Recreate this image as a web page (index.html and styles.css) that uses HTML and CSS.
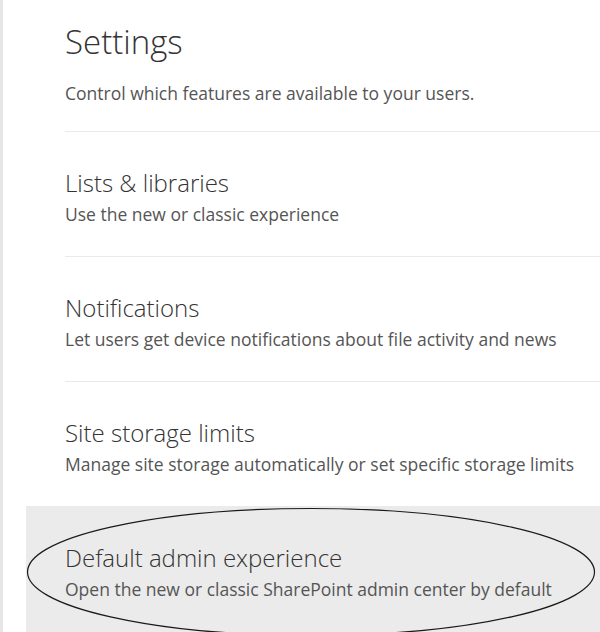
FILE: index.html
```html
<!DOCTYPE html>
<html lang="en">
<head>
<meta charset="utf-8">
<title>Settings</title>
<link rel="stylesheet" href="styles.css">
</head>
<body>
<div class="page">
  <header class="header">
    <h1 class="heading">Settings</h1>
    <p class="intro">Control which features are available to your users.</p>
  </header>
  <ul class="list">
    <li class="item">
      <div class="title">Lists &amp; libraries</div>
      <div class="desc">Use the new or classic experience</div>
    </li>
    <li class="item">
      <div class="title">Notifications</div>
      <div class="desc">Let users get device notifications about file activity and news</div>
    </li>
    <li class="item">
      <div class="title">Site storage limits</div>
      <div class="desc">Manage site storage automatically or set specific storage limits</div>
    </li>
    <li class="item item-selected">
      <div class="title">Default admin experience</div>
      <div class="desc">Open the new or classic SharePoint admin center by default</div>
      <svg class="ellipse" width="574" height="130" viewBox="0 0 574 130" aria-hidden="true">
        <ellipse cx="285" cy="66" rx="283.5" ry="63.5" fill="none" stroke="#1a1a1a" stroke-width="1.2"/>
      </svg>
    </li>
  </ul>
</div>
</body>
</html>
```

FILE: styles.css
```css
html, body {
  margin: 0;
  padding: 0;
  background: #ffffff;
}

body {
  font-family: "Open Sans", "Noto Sans", "Liberation Sans", sans-serif;
  color: #333333;
  overflow: hidden;
}

.page {
  border-left: 3px solid #e6e6e6;
  min-height: 632px;
  padding-left: 62px;
  box-sizing: border-box;
}

.header {
  padding-top: 22px;
  padding-bottom: 26px;
}

.heading {
  margin: 0;
  font-size: 33px;
  line-height: 40px;
  font-weight: 300;
  color: #333333;
}

.intro {
  margin: 19px 0 0;
  font-size: 17.5px;
  line-height: 24px;
  color: #555555;
}

.list {
  list-style: none;
  margin: 0;
  padding: 0;
}

.item {
  border-top: 1px solid #eaeaea;
  padding: 35px 0 30px;
}

.title {
  font-size: 24px;
  line-height: 32px;
  font-weight: 300;
  color: #333333;
}

.desc {
  margin-top: 3px;
  font-size: 17.5px;
  line-height: 24px;
  color: #555555;
}

.item-selected {
  position: relative;
  border-top: none;
  margin-left: -39px;
  padding-left: 39px;
  padding-top: 36px;
  background: #ebebeb;
  min-height: 130px;
  box-sizing: border-box;
}

.ellipse {
  position: absolute;
  left: 0;
  top: 0;
}
```
